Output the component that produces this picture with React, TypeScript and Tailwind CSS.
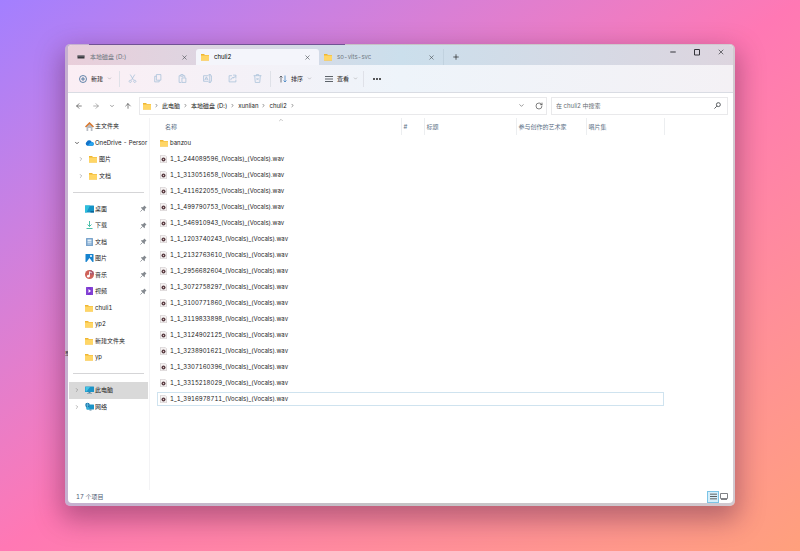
import type { ReactNode } from "react";
import {
  ArrowLeft,
  ArrowRight,
  ArrowUp,
  ChevronDown,
  ChevronRight,
  ChevronUp,
  Minus,
  Plus,
  RotateCw,
  X,
} from "lucide-react";

function Folder() {
  return (
    <svg viewBox="0 0 16 16" className="h-2 w-2 shrink-0" aria-hidden="true">
      <path d="M0 2h6l2 2h8v11H0z" fill="#efb632" />
      <path d="M0 5h16v10H0z" fill="#ffd666" />
    </svg>
  );
}

function Drive() {
  return (
    <svg viewBox="0 0 16 16" className="h-2 w-2 shrink-0" aria-hidden="true">
      <path d="M1 5h14v6H1z" fill="#37383d" />
      <path d="M1 5h14v2H1z" fill="#77757d" />
    </svg>
  );
}

function Home() {
  return (
    <svg viewBox="0 0 18 18" className="h-[9px] w-[9px] shrink-0" aria-hidden="true">
      <path d="M3 8v10h4v-6h4v6h4V8L9 3z" fill="#b9bcc2" />
      <path d="M7 12h4v6H7z" fill="#fff" />
      <path d="M1 10l8-8 8 8" fill="none" stroke="#d9772b" strokeWidth="3" />
    </svg>
  );
}

function Cloud() {
  return (
    <svg viewBox="0 0 20 16" className="h-[8px] w-[9px] shrink-0" aria-hidden="true">
      <path d="M5 14a5 5 0 0 1-1-9 6 6 0 0 1 11 1 4 4 0 0 1 1 8z" fill="#1173c9" />
      <path d="M6 14l5-6 4-2a4 4 0 0 1 1 8z" fill="#2aa5ee" />
    </svg>
  );
}

function Desktop() {
  return (
    <svg viewBox="0 0 18 16" className="h-2 w-[9px] shrink-0" aria-hidden="true">
      <rect y="1" width="18" height="14" rx="1" fill="#1593c6" />
      <path d="M0 1h10L3 15H0z" fill="#2fbfdc" />
      <path d="M11 12h7v3h-7z" fill="#0d6499" />
    </svg>
  );
}

function Download() {
  return (
    <svg viewBox="0 0 16 16" className="h-2 w-[9px] shrink-0" fill="none" stroke="#2bb399" strokeWidth="1.7" aria-hidden="true">
      <path d="M8 0v11M4 7l4 4 4-4M2 15h12" />
    </svg>
  );
}

function Document() {
  return (
    <svg viewBox="0 0 16 16" className="h-2 w-[9px] shrink-0" aria-hidden="true">
      <rect x="1" width="14" height="16" rx="1" fill="#7aa4cc" />
      <path d="M4 3h8v4H4z" fill="#e6f2fb" />
      <path d="M4 9h8M4 12h8" stroke="#e6f2fb" strokeWidth="1.5" />
    </svg>
  );
}

function Picture() {
  return (
    <svg viewBox="0 0 16 16" className="h-2 w-[9px] shrink-0" aria-hidden="true">
      <rect width="16" height="16" rx="1" fill="#1683cf" />
      <path d="M2 16l6-8 6 8z" fill="#fff" />
      <circle cx="11" cy="4" r="2" fill="#fff" />
    </svg>
  );
}

function Music() {
  return (
    <svg viewBox="0 0 16 16" className="h-[9px] w-[9px] shrink-0" aria-hidden="true">
      <circle cx="8" cy="8" r="8" fill="#cf6259" />
      <path d="M8 0a8 8 0 0 1 8 8H8z" fill="#a9586e" />
      <path d="M8 11V3l4 2" fill="none" stroke="#fff" strokeWidth="1.6" />
      <circle cx="6" cy="11" r="2.4" fill="#fff" />
    </svg>
  );
}

function Video() {
  return (
    <svg viewBox="0 0 16 16" className="h-2 w-[9px] shrink-0" aria-hidden="true">
      <rect x="1" width="14" height="16" rx="1" fill="#7c36d1" />
      <path d="M3 1v14M13 1v14" stroke="#a77be5" strokeWidth="1.5" strokeDasharray="2 2" />
      <path d="M6 4l5 4-5 4z" fill="#fff" />
    </svg>
  );
}

function Computer() {
  return (
    <svg viewBox="0 0 18 16" className="h-2 w-[9px] shrink-0" aria-hidden="true">
      <rect y="1" width="18" height="11" rx="1" fill="#1c94c7" />
      <path d="M1 2h9L3 11H1z" fill="#45c4e4" />
      <path d="M7 12h4v2h3v1H4v-1h3z" fill="#55819b" />
    </svg>
  );
}

function Network() {
  return (
    <svg viewBox="0 0 18 16" className="h-[9px] w-[9px] shrink-0" aria-hidden="true">
      <rect x="3" y="4" width="15" height="10" rx="1" fill="#1c94c7" />
      <path d="M9 14h4v2H9z" fill="#55819b" />
      <circle cx="5" cy="5" r="4.5" fill="#1776ad" />
      <path d="M5 1v8M1 5h8" stroke="#8fd9ef" />
      <path d="M2 9h5l3 5H4z" fill="#35aed6" />
    </svg>
  );
}

function Pin() {
  return (
    <svg viewBox="0 0 16 16" className="h-[7px] w-[7px] shrink-0" aria-hidden="true">
      <path d="M10 1l5 5-2 1-2 3v3l-1 1-8-8 1-1h3l3-2z" fill="#858a90" />
      <path d="M6 10l-5 5" stroke="#858a90" strokeWidth="1.8" />
    </svg>
  );
}

function Wave() {
  return (
    <svg viewBox="0 0 14 16" className="h-2 w-[7px] shrink-0" aria-hidden="true">
      <path d="M1 0.5h9l3 3v12H1z" fill="#f6f2f2" stroke="#bdb5b6" />
      <circle cx="7" cy="9" r="4" fill="#563c42" />
      <circle cx="7" cy="9" r="1.3" fill="#e9c9cc" />
    </svg>
  );
}

function ToolGlyph({ d }: { d: string }) {
  return (
    <svg viewBox="0 0 16 16" className="h-[9px] w-[9px]" fill="none" stroke="currentColor" strokeWidth="1.4" aria-hidden="true">
      <path d={d} />
    </svg>
  );
}

function Magnifier() {
  return (
    <svg viewBox="0 0 16 16" className="h-[7px] w-[7px] shrink-0" fill="none" stroke="#43484d" strokeWidth="2" aria-hidden="true">
      <circle cx="10" cy="6" r="4.5" />
      <path d="M6.500 9.500L1 15" />
    </svg>
  );
}

function Tab({ icon, label, active }: { icon: ReactNode; label: string; active?: boolean }) {
  return (
    <div
      className={
        active
          ? "flex h-4 w-[123px] items-center gap-[5px] rounded-t-[3px] bg-[#f4f5fb] pr-2 pl-[5px] text-black"
          : "flex h-4 w-[124px] items-center gap-[5px] pr-2 pl-[5px] text-[#6d7680]"
      }
    >
      {icon}
      <button className="flex-1 text-left">{label}</button>
      <button aria-label={"关闭 " + label}>
        <X size={7} strokeWidth={2} className="text-[#41484e]" />
      </button>
    </div>
  );
}

function Divider() {
  return <span className="h-4 w-px bg-[#dfe1e8]" />;
}

function FadedTool({ label, d }: { label: string; d: string }) {
  return (
    <button aria-label={label} disabled className="flex w-[25px] justify-center text-[#a9c2da]">
      <ToolGlyph d={d} />
    </button>
  );
}

function Crumb({ children }: { children: string }) {
  return (
    <>
      <ChevronRight size={5} strokeWidth={3} className="text-[#555]" />
      <button>{children}</button>
    </>
  );
}

type Place = {
  label: string;
  icon: ReactNode;
  pinned?: boolean;
  child?: boolean;
  arrow?: "right" | "down";
  selected?: boolean;
};

const places: (Place | null)[] = [
  { label: "主文件夹", icon: <Home /> },
  { label: "OneDrive - Persor", icon: <Cloud />, arrow: "down" },
  { label: "图片", icon: <Folder />, arrow: "right", child: true },
  { label: "文档", icon: <Folder />, arrow: "right", child: true },
  null,
  { label: "桌面", icon: <Desktop />, pinned: true },
  { label: "下载", icon: <Download />, pinned: true },
  { label: "文档", icon: <Document />, pinned: true },
  { label: "图片", icon: <Picture />, pinned: true },
  { label: "音乐", icon: <Music />, pinned: true },
  { label: "视频", icon: <Video />, pinned: true },
  { label: "chuli1", icon: <Folder /> },
  { label: "yp2", icon: <Folder /> },
  { label: "新建文件夹", icon: <Folder /> },
  { label: "yp", icon: <Folder /> },
  null,
  { label: "此电脑", icon: <Computer />, arrow: "right", selected: true },
  { label: "网络", icon: <Network />, arrow: "right" },
];

const ids = [
  "244089596", "313051658", "411622055", "499790753", "546910943", "1203740243",
  "2132763610", "2956682604", "3072758297", "3100771860", "3119833898", "3124902125",
  "3238901621", "3307160396", "3315218029", "3916978711",
];

function PlaceRow({ place }: { place: Place }) {
  return (
    <li className={place.selected ? "flex items-center bg-[#d9d9d9]" : "flex items-center"}>
      <button className="flex min-w-0 flex-1 items-center whitespace-nowrap">
        <span className={place.child ? "flex w-[20px] shrink-0 justify-center pl-1" : "flex w-4 shrink-0 justify-center"}>
          {place.arrow === "right" && <ChevronRight size={6} strokeWidth={2} className="text-[#777]" />}
          {place.arrow === "down" && <ChevronDown size={6} strokeWidth={3} className="text-[#333]" />}
        </span>
        <span className="flex w-[10px] shrink-0">{place.icon}</span>
        {place.label}
      </button>
      {place.pinned && (
        <span className="mr-px">
          <Pin />
        </span>
      )}
    </li>
  );
}

function HeadCell({ width, label }: { width: string; label: string }) {
  return (
    <th className={width + " border-r border-[#eceef0] pl-[2px] text-left font-normal"}>{label}</th>
  );
}

export default function App() {
  return (
    <div className="flex h-screen bg-linear-to-br from-[#a37fff] via-[#ff78b4] to-[#ffa07c] px-[65px] pt-[44px] pb-[45px] font-['Inter','Noto_Sans_CJK_SC',sans-serif] text-[6px] leading-[8px] text-[#1c1c1c] tabular-nums">
      <div className="relative flex min-w-0 flex-1 rounded-[5px] bg-linear-to-r from-[#c6b0d0] via-[#c5c3c5] to-[#d2c9d0] pt-px pr-[2px] pb-[3px] pl-[3px] shadow-[0_10px_26px_4px_rgba(70,20,60,0.38)]">
        <span className="absolute top-0 left-6 h-px w-64 bg-[#715394]" />
        <span className="absolute top-[305px] left-0">或</span>
        <div className="relative flex min-w-0 flex-1 flex-col overflow-hidden rounded-[4px] bg-white">
          <header className="flex h-5 shrink-0 items-end bg-linear-to-r from-[#e9ceda] via-[#cbdfec] to-[#ddd5df] pl-1">
            <Tab icon={<Drive />} label="本地磁盘 (D:)" />
            <Tab icon={<Folder />} label="chuli2" active />
            <Tab icon={<Folder />} label="so-vits-svc" />
            <button aria-label="新标签页" className="flex h-4 w-6 items-center justify-center border-l border-[#c1d2df]">
              <Plus size={8} strokeWidth={2} />
            </button>
            <div className="ml-auto flex h-full items-start gap-4 pt-[3px] pr-2 text-[#34343a]">
              <button aria-label="最小化"><Minus size={8} strokeWidth={3} /></button>
              <button aria-label="最大化">
                <svg viewBox="0 0 16 16" className="h-2 w-2" fill="none" stroke="currentColor" strokeWidth="2" aria-hidden="true">
                  <path d="M3 3h10v11H3z" />
                </svg>
              </button>
              <button aria-label="关闭"><X size={8} strokeWidth={2} /></button>
            </div>
          </header>

          <div className="flex h-7 shrink-0 items-center border-b border-[#d9dce3] bg-linear-to-r from-[#fbeef4] via-[#eef4fa] to-[#f4f1f5]">
            <button className="flex w-[51px] items-center gap-1 pl-[11px]">
              <svg viewBox="0 0 16 16" className="h-2 w-2" fill="none" stroke="#3d6b98" strokeWidth="1.6" aria-hidden="true">
                <circle cx="8" cy="8" r="7" />
                <path d="M8 4v8M4 8h8" />
              </svg>
              新建
              <ChevronDown size={5} className="text-[#888]" />
            </button>
            <Divider />
            <FadedTool label="剪切" d="M4 1l6 10M12 1L6 11M4 11a2 2 0 1 0 0.100 0zM12 11a2 2 0 1 0 0.100 0z" />
            <FadedTool label="复制" d="M6 1h8v10H6zM6 4H3v10h8v-3" />
            <FadedTool label="粘贴" d="M5 3H2v12h4M9 3h3v3M5 1h4v3H5zM7 7h7v8H7z" />
            <FadedTool label="重命名" d="M10 3H1v10h9M13 3h2v10h-2M12 1v14M10 1h4M10 15h4M3 11l3-6 3 6M4 9h4" />
            <FadedTool label="共享" d="M7 3H2v11h12v-4M5 11c0-4 3-5 6-5M9 2h5v6M14 3l-5 5" />
            <FadedTool label="删除" d="M1 3h14M6 3V1h4v2M3 3l1 12h8l1-12M6 7l4 4M10 7l-4 4" />
            <Divider />
            <button className="flex w-[46px] items-center gap-1 pl-2">
              <svg viewBox="0 0 16 16" className="h-2 w-2" fill="none" strokeWidth="1.5" aria-hidden="true">
                <path d="M4 15V2M1 5l3-3 3 3" stroke="#4a4f56" />
                <path d="M12 1v13M9 11l3 3 3-3" stroke="#3a7fc0" />
              </svg>
              排序
              <ChevronDown size={5} className="text-[#888]" />
            </button>
            <button className="flex w-[46px] items-center gap-1 pl-2">
              <svg viewBox="0 0 16 16" className="h-2 w-2" stroke="#4c5259" strokeWidth="1.8" aria-hidden="true">
                <path d="M0 3h16M0 8h16M0 13h16" />
              </svg>
              查看
              <ChevronDown size={5} className="text-[#888]" />
            </button>
            <Divider />
            <button aria-label="更多" className="flex w-[26px] justify-center gap-px">
              <span className="h-[2px] w-[2px] rounded-full bg-[#222]" />
              <span className="h-[2px] w-[2px] rounded-full bg-[#222]" />
              <span className="h-[2px] w-[2px] rounded-full bg-[#222]" />
            </button>
          </div>

          <nav className="flex h-[25px] shrink-0 items-center gap-1 pr-[5px] pl-[7px]">
            <div className="flex w-[60px] items-center gap-[9px] text-[#444]">
              <button aria-label="后退"><ArrowLeft size={8} strokeWidth={2} /></button>
              <button aria-label="前进" className="text-[#888]"><ArrowRight size={8} strokeWidth={2} /></button>
              <button aria-label="最近位置"><ChevronDown size={6} strokeWidth={2} /></button>
              <button aria-label="向上"><ArrowUp size={8} strokeWidth={2} /></button>
            </div>
            <div className="flex h-[18px] flex-1 items-center gap-[3px] border border-[#e9e9eb] px-[3px]">
              <Folder />
              <Crumb>此电脑</Crumb>
              <Crumb>本地磁盘 (D:)</Crumb>
              <Crumb>xunlian</Crumb>
              <Crumb>chuli2</Crumb>
              <ChevronRight size={5} strokeWidth={3} className="text-[#555]" />
              <button aria-label="历史" className="mr-[7px] ml-auto"><ChevronDown size={7} className="text-[#555]" /></button>
              <button aria-label="刷新"><RotateCw size={8} className="text-[#444]" /></button>
            </div>
            <label className="flex h-[18px] w-[177px] items-center border border-[#e9e9eb] pr-[6px] pl-1">
              <input
                aria-label="搜索"
                placeholder="在 chuli2 中搜索"
                className="min-w-0 flex-1 outline-none placeholder:text-[#666c72]"
              />
              <Magnifier />
            </label>
          </nav>

          <div className="flex min-h-0 flex-1">
            <aside className="w-[82px] shrink-0 border-r border-[#f3f3f5] pr-px pl-px">
              <ul className="grid h-[297px] auto-rows-fr">
                {places.map((place, i) =>
                  place ? (
                    <PlaceRow key={i} place={place} />
                  ) : (
                    <li key={i} className="flex items-center pr-1 pl-1">
                      <hr className="flex-1 border-[#d5d5d7]" />
                    </li>
                  ),
                )}
              </ul>
            </aside>
            <main className="relative min-w-0 flex-1 pl-[7px]">
              <ChevronUp size={6} className="absolute -top-px left-[128px] text-[#888]" />
              <table className="w-[507px] table-fixed border-collapse">
                <thead className="text-[#5b6f86]">
                  <tr className="h-[17px]">
                    <th className="w-[244px] border-r border-[#eceef0] pl-2 text-left font-normal">名称</th>
                    <HeadCell width="w-[23px]" label="#" />
                    <HeadCell width="w-[92px]" label="标题" />
                    <HeadCell width="w-[70px]" label="参与创作的艺术家" />
                    <HeadCell width="w-[78px]" label="唱片集" />
                  </tr>
                </thead>
                <tbody>
                  <tr className="h-4">
                    <td colSpan={5}>
                      <div className="flex items-center gap-[2px] pl-[3px]">
                        <Folder />
                        banzou
                      </div>
                    </td>
                  </tr>
                  {ids.map((id, i) => (
                    <tr key={id} className="h-4">
                      <td colSpan={5}>
                        <div
                          className={
                            i === ids.length - 1
                              ? "flex h-[14px] items-center gap-[3px] border border-[#cfe3ef] pl-[2px]"
                              : "flex h-[14px] items-center gap-[3px] pl-[3px]"
                          }
                        >
                          <Wave />
                          {"1_1_" + id + "_(Vocals)_(Vocals).wav"}
                        </div>
                      </td>
                    </tr>
                  ))}
                </tbody>
              </table>
            </main>
          </div>

          <footer className="flex h-[13px] shrink-0 items-center pr-[5px] pl-2 text-[#4c5a70]">
            <span className="flex-1">17 个项目</span>
            <button aria-label="详细信息" className="flex h-3 w-3 items-center justify-center border border-[#7cc4e6] bg-[#d5eefa]">
              <svg viewBox="0 0 12 12" className="h-[7px] w-[7px]" stroke="#555" strokeWidth="1.6" aria-hidden="true">
                <path d="M0 2h12M0 6h12M0 10h12" />
              </svg>
            </button>
            <button aria-label="大图标" className="ml-px flex">
              <svg viewBox="0 0 16 14" className="h-[7px] w-[8px]" fill="none" stroke="#808286" strokeWidth="2" aria-hidden="true">
                <path d="M1 1h14v10H1zM2 13h12" />
              </svg>
            </button>
          </footer>
        </div>
      </div>
    </div>
  );
}
